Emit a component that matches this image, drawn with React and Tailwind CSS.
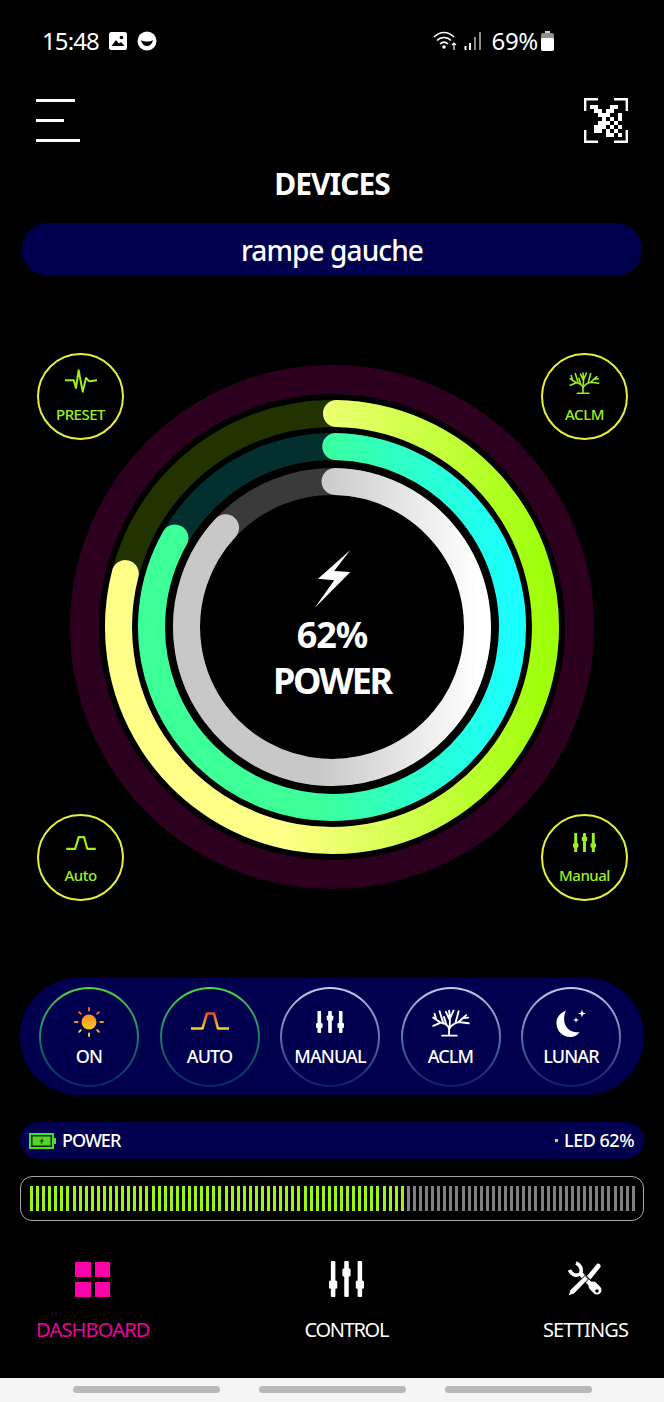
import React from "react";

const font = { fontFamily: '"Noto Sans", sans-serif' };

function arcPath(r, deg) {
  const cx = 332;
  const cy = 287;
  const start = (1.2 * Math.PI) / 180;
  const a = (deg * Math.PI) / 180;
  const sx = cx + r * Math.sin(start);
  const sy = cy - r * Math.cos(start);
  const x = cx + r * Math.sin(a);
  const y = cy - r * Math.cos(a);
  const large = deg > 180 ? 1 : 0;
  return `M ${sx.toFixed(2)} ${sy.toFixed(2)} A ${r} ${r} 0 ${large} 1 ${x.toFixed(2)} ${y.toFixed(2)}`;
}

function Sliders({ className }) {
  return (
    <svg viewBox="0 0 34 35" preserveAspectRatio="none" className={className} fill="currentColor">
      <rect x="1.8" y="0" width="4.4" height="35" rx="1" />
      <rect x="14.8" y="0" width="4.4" height="35" rx="1" />
      <rect x="27.8" y="0" width="4.4" height="35" rx="1" />
      <rect x="0" y="19" width="8" height="8" rx="1.5" />
      <rect x="13" y="7" width="8" height="8" rx="1.5" />
      <rect x="26" y="19" width="8" height="8" rx="1.5" />
    </svg>
  );
}

function Tree({ className }) {
  return (
    <svg viewBox="0 0 120 86" className={className} fill="none" stroke="currentColor" strokeWidth="6" strokeLinecap="round" strokeLinejoin="round">
      <path d="M32 83H78M54 83V58" />
      <path d="M54 60C50 48 40 44 28 42M28 42L4 52M28 42L4 26M14 33L8 14M36 45L24 6M46 50L38 24" />
      <path d="M55 60C57 45 58 30 54 4M56 34L44 8M56 30L68 4" />
      <path d="M55 60C60 50 70 44 84 40M84 40L116 44M84 40L108 18M96 28L114 26M74 44L84 6" />
    </svg>
  );
}

function Pulse({ className }) {
  return (
    <svg viewBox="0 0 96 72" className={className} fill="none" stroke="currentColor" strokeWidth="6" strokeLinejoin="round">
      <path d="M0 34H26L33 57L41 4L53 68L63 27L73 37L96 34" />
    </svg>
  );
}

function Trapeze({ className }) {
  return (
    <svg viewBox="0 0 38 18" className={className} fill="none" stroke="currentColor" strokeWidth="2.8" strokeLinejoin="round">
      <path d="M0 16.5H11.5L16 1.5H23L27 16.5H38" />
    </svg>
  );
}

function Sun() {
  const rays = [
    [0, "#f2753a"],
    [45, "#f2753a"],
    [90, "#f9a030"],
    [135, "#fbc02d"],
    [180, "#fdd835"],
    [225, "#fdd835"],
    [270, "#f9a030"],
    [315, "#f2753a"],
  ];
  return (
    <svg viewBox="0 0 30 30" className="w-[30px] h-[30px] mb-[2px]">
      <defs>
        <linearGradient id="sunDisc" x1="0" y1="0" x2="0" y2="1">
          <stop offset="0" stopColor="#fb8c2a" />
          <stop offset="1" stopColor="#ffc81f" />
        </linearGradient>
      </defs>
      <circle cx="15" cy="15" r="7.5" fill="url(#sunDisc)" />
      {rays.map(([deg, c]) => (
        <line key={deg} x1="15" y1="1" x2="15" y2="3.5" stroke={c} strokeWidth="1.8" strokeLinecap="round" transform={`rotate(${deg} 15 15)`} />
      ))}
    </svg>
  );
}

function Moon() {
  return (
    <svg viewBox="0 0 30 28" className="w-[30px] h-[28px] mb-[2px]" fill="white">
      <path d="M10 1.5C3.5 4 0 9 0.5 15C1 22.5 7 28 14 28C18.5 28 21.8 26 23.5 23C16.5 24.5 10 20 8.5 13.5C7.7 9.5 8.2 5 10 1.5Z" />
      <path d="M26 0.5L27 3.5L29.8 4.5L27 5.5L26 8.5L25 5.5L22.2 4.5L25 3.5Z" />
      <path d="M20 8L20.7 10.3L23 11L20.7 11.7L20 14L19.3 11.7L17 11L19.3 10.3Z" />
    </svg>
  );
}

function QrIcon() {
  const rows = [
    [0, 1, 5, 6],
    [1, 2, 4, 5],
    [2, 3, 4, 7],
    [3, 5, 7],
    [2, 3, 4, 6],
    [1, 2, 3, 5, 7],
    [1, 2, 4, 6],
    [4, 5, 7],
  ];
  return (
    <svg viewBox="0 0 44 45" className="w-[44px] h-[45px]" fill="none">
      <path d="M1.2 13V1.2H14M30 1.2H42.8V13M1.2 32V43.8H14M30 43.8H42.8V32" stroke="white" strokeWidth="2.4" />
      {rows.map((row, y) =>
        row.map((x) => (
          <rect key={`${x}-${y}`} x={6 + x * 4} y={7 + y * 4} width="4" height="4" fill="white" />
        ))
      )}
    </svg>
  );
}

function Tools() {
  return (
    <svg viewBox="0 0 36 36" className="w-[36px] h-[36px]" fill="none">
      <path d="M9 2C13 3.5 15.5 8 13.5 12.5C10 15.5 5 14.5 2.5 9" stroke="white" strokeWidth="3.6" />
      <path d="M13 12L27 27" stroke="white" strokeWidth="4.5" />
      <path d="M26 25L30 29" stroke="white" strokeWidth="9" strokeLinecap="round" />
      <circle cx="30" cy="30" r="1.8" fill="black" />
      <path d="M1 35L3 29L18 14.5L21.5 18L7 33Z" fill="white" stroke="black" strokeWidth="1" />
      <path d="M20 15L30 3C31.5 1.5 34.5 4 33.5 6L23.5 18.5Z" fill="white" />
    </svg>
  );
}

function CornerButton({ label, className, children }) {
  return (
    <div className={`absolute w-[87px] h-[87px] rounded-full border-2 border-[#e6f03c] flex flex-col items-center text-[#9cf01e] ${className}`}>
      <div className="h-[48px] w-full flex items-end justify-center">{children}</div>
      <span className="mt-[1px] text-[15px] leading-[20px] tracking-[-0.5px] font-medium">{label}</span>
    </div>
  );
}

function ModeButton({ label, active, children }) {
  return (
    <div className={`w-[100px] h-[100px] rounded-full p-[2px] bg-gradient-to-b ${active ? "from-[#4fd83c] to-[#0a2460]" : "from-[#c4cdea] to-[#0f1a68]"}`}>
      <div className="w-full h-full rounded-full bg-[#00004f] flex flex-col items-center text-white">
        <div className="h-[50px] w-full flex items-end justify-center">{children}</div>
        <span className="mt-[5px] text-[18px] leading-[24px] tracking-[-0.9px] font-medium">{label}</span>
      </div>
    </div>
  );
}

function NavItem({ label, color, tracking, children }) {
  return (
    <div className={`flex flex-col items-center ${color}`}>
      <div className="h-[36px] flex items-center">{children}</div>
      <span className={`mt-[20px] text-[20px] leading-[26px] ${tracking}`}>{label}</span>
    </div>
  );
}

export default function App() {
  const bars = Array.from({ length: 100 }, (_, i) => i);

  return (
    <div className="w-[664px] h-[1402px] bg-black flex flex-col text-white overflow-hidden" style={font}>
      {/* Status bar */}
      <div className="h-[84px] pl-[42px] pr-[110px] pt-[25px] flex justify-between items-start">
        <div className="flex items-center h-[32px]">
          <span className="text-[24px] leading-[32px] tracking-[-0.9px]">15:48</span>
          <svg viewBox="0 0 18 18" className="w-[18px] h-[18px] ml-[10px]">
            <rect width="18" height="18" rx="2.5" fill="white" />
            <circle cx="12.5" cy="5.5" r="1.8" fill="black" />
            <path d="M2.5 14L7 8L10 11.5L12 10L15.5 14Z" fill="black" />
          </svg>
          <svg viewBox="0 0 20 20" className="w-[20px] h-[20px] ml-[10px]">
            <circle cx="10" cy="10" r="9.5" fill="white" />
            <path d="M4 9C5 13 7 15 10 15C13 15 15 13 16 9C13 11 7 11 4 9Z" fill="black" />
          </svg>
        </div>
        <div className="flex items-center h-[32px]">
          <svg viewBox="0 0 26 22" className="w-[26px] h-[22px]" fill="none" stroke="white" strokeWidth="1.5">
            <path d="M1 7C7 1 15 1 21 7M4 10.5C8 6.5 14 6.5 18 10.5M7 14C9.5 11.5 12.5 11.5 15 14" />
            <circle cx="11" cy="17" r="1" fill="white" />
            <path d="M21 20V13M19 15L21 13L23 15" strokeWidth="1.2" />
          </svg>
          <svg viewBox="0 0 18 20" className="w-[18px] h-[20px] ml-[5px]" fill="#8a8a8a">
            <rect x="0.5" y="15" width="2" height="4" fill="white" />
            <rect x="5" y="12" width="2" height="7" fill="white" />
            <rect x="10" y="6" width="2" height="13" />
            <rect x="15" y="1" width="2" height="18" />
          </svg>
          <span className="ml-[10px] text-[24px] leading-[32px] tracking-[-0.3px]">69%</span>
          <svg viewBox="0 0 13 20" className="w-[13px] h-[20px] ml-[3px]">
            <rect x="4" y="0" width="5" height="3" fill="#cfcfcf" />
            <rect x="0" y="2" width="13" height="18" rx="2" fill="#8f8f8f" />
            <rect x="0" y="7" width="13" height="13" rx="2" fill="white" />
          </svg>
        </div>
      </div>

      {/* Top bar */}
      <div className="h-[60px] mt-[14px] px-[36px] flex justify-between items-start">
        <div className="flex flex-col gap-[17px] pt-[1px]">
          <div className="w-[39px] h-[3px] bg-white" />
          <div className="w-[28px] h-[3px] bg-white" />
          <div className="w-[44px] h-[3px] bg-white" />
        </div>
        <QrIcon />
      </div>

      <div className="h-[40px] mt-[6px] text-center text-[30px] leading-[40px] font-bold tracking-[-1px]">DEVICES</div>

      <div className="mx-[22px] mt-[19px] h-[53px] rounded-full bg-[#00004f] flex items-center justify-center text-[28px] font-medium tracking-[-0.9px]">
        rampe gauche
      </div>

      {/* Gauge */}
      <div className="relative mt-[64px] h-[574px]">
        <svg viewBox="0 0 664 574" className="w-[664px] h-[574px] block" fill="none">
          <defs>
            <linearGradient id="ringYellow" gradientUnits="userSpaceOnUse" x1="118" y1="0" x2="546" y2="0">
              <stop offset="0.38" stopColor="#ffff88" />
              <stop offset="1" stopColor="#9eff0a" />
            </linearGradient>
            <linearGradient id="ringGreen" gradientUnits="userSpaceOnUse" x1="151" y1="0" x2="513" y2="0">
              <stop offset="0.45" stopColor="#3dff98" />
              <stop offset="1" stopColor="#1affff" />
            </linearGradient>
            <linearGradient id="ringWhite" gradientUnits="userSpaceOnUse" x1="186" y1="0" x2="478" y2="0">
              <stop offset="0.45" stopColor="#c8c8c8" />
              <stop offset="1" stopColor="#ffffff" />
            </linearGradient>
          </defs>
          <circle cx="332" cy="287" r="247.5" stroke="#2e001f" strokeWidth="29" />
          <circle cx="332" cy="287" r="213.5" stroke="#233300" strokeWidth="27" />
          <circle cx="332" cy="287" r="180.5" stroke="#03302f" strokeWidth="27" />
          <circle cx="332" cy="287" r="145.5" stroke="#3a3a3a" strokeWidth="27" />
          <path d={arcPath(213.5, 284.5)} stroke="url(#ringYellow)" strokeWidth="27" strokeLinecap="round" />
          <path d={arcPath(180.5, 299.5)} stroke="url(#ringGreen)" strokeWidth="27" strokeLinecap="round" />
          <path d={arcPath(145.5, 313)} stroke="url(#ringWhite)" strokeWidth="27" strokeLinecap="round" />
        </svg>

        <div className="absolute left-0 right-0 top-[210px] flex flex-col items-center">
          <svg viewBox="0 0 106 172" className="w-[37px] h-[58px]" fill="white">
            <path d="M106 0L10 85L58 90L0 172L106 65L58 62Z" />
          </svg>
          <span className="mt-[4px] text-[36px] leading-[46px] font-bold tracking-[-1px]">62%</span>
          <span className="text-[36px] leading-[46px] font-bold tracking-[-2.2px]">POWER</span>
        </div>

        <CornerButton label="PRESET" className="left-[37px] top-[13px]">
          <Pulse className="w-[32px] h-[24px] mb-[10px]" />
        </CornerButton>
        <CornerButton label="ACLM" className="left-[541px] top-[13px]">
          <Tree className="w-[31px] h-[22px] mb-[9px]" />
        </CornerButton>
        <CornerButton label="Auto" className="left-[37px] top-[474px]">
          <Trapeze className="w-[30px] h-[14px] mb-[14px]" />
        </CornerButton>
        <CornerButton label="Manual" className="left-[541px] top-[474px]">
          <Sliders className="w-[23px] h-[19px] mb-[12px]" />
        </CornerButton>
      </div>

      {/* Mode selector */}
      <div className="mx-[20px] mt-[64px] h-[117px] rounded-[58px] bg-[#00004f] pl-[19px] pr-[23px] flex items-center justify-between">
        <ModeButton label="ON" active>
          <Sun />
        </ModeButton>
        <ModeButton label="AUTO" active>
          <svg viewBox="0 0 38 18" className="w-[38px] h-[18px] mb-[9px]" fill="none" strokeWidth="2.6" strokeLinejoin="round">
            <defs>
              <linearGradient id="autoStroke" gradientUnits="userSpaceOnUse" x1="0" y1="0" x2="0" y2="18">
                <stop offset="0" stopColor="#e0452e" />
                <stop offset="1" stopColor="#ffd52a" />
              </linearGradient>
            </defs>
            <path d="M0 16.5H11.5L16 1.5H23L27 16.5H38" stroke="url(#autoStroke)" />
          </svg>
        </ModeButton>
        <ModeButton label="MANUAL">
          <Sliders className="w-[28px] h-[22px] mb-[6px]" />
        </ModeButton>
        <ModeButton label="ACLM">
          <Tree className="w-[38px] h-[28px] mb-[2px]" />
        </ModeButton>
        <ModeButton label="LUNAR">
          <Moon />
        </ModeButton>
      </div>

      {/* Power strip */}
      <div className="mx-[20px] mt-[27px] h-[37px] rounded-full bg-[#00004f] pl-[9px] pr-[10px] flex items-center justify-between text-[18px] font-medium">
        <div className="flex items-center">
          <svg viewBox="0 0 27 16" className="w-[27px] h-[16px]">
            <rect x="1" y="1" width="23" height="14" fill="#0c2a10" stroke="#3fe030" strokeWidth="2" />
            <rect x="25" y="5" width="2" height="6" fill="#3fe030" />
            <rect x="3.5" y="3.5" width="18" height="9" fill="#56d426" />
            <path d="M14 4.5L10.5 8.5H12.5L11.5 11.5L15 7.5H13Z" fill="#0c3a08" />
          </svg>
          <span className="ml-[6px] tracking-[-1px]">POWER</span>
        </div>
        <div className="flex items-center">
          <div className="w-[3px] h-[3px] bg-[#9eff0a]" />
          <span className="ml-[6px] tracking-[-0.5px]">LED 62%</span>
        </div>
      </div>

      <div className="mx-[20px] mt-[17px] h-[45px] rounded-[12px] border border-[#a8a8a8] pl-[9px] pr-[8px] py-[9px] flex justify-between">
        {bars.map((i) => (
          <div key={i} className={`w-[3px] h-full ${i < 62 ? "bg-[#9ef50f]" : "bg-[#808080]"}`} />
        ))}
      </div>

      {/* Bottom nav */}
      <div className="h-[157px] px-[36px] pt-[40px] flex justify-between items-start">
        <NavItem label="DASHBOARD" color="text-[#f000a0]" tracking="tracking-[-0.8px]">
          <div className="grid grid-cols-2 gap-x-[4px] gap-y-[5px] w-[35px]">
            <div className="h-[15px] bg-[#ff00aa]" />
            <div className="h-[15px] bg-[#ff00aa]" />
            <div className="h-[15px] bg-[#ff00aa]" />
            <div className="h-[15px] bg-[#ff00aa]" />
          </div>
        </NavItem>
        <NavItem label="CONTROL" color="text-white" tracking="tracking-[-1.3px]">
          <Sliders className="w-[35px] h-[36px]" />
        </NavItem>
        <NavItem label="SETTINGS" color="text-white" tracking="tracking-[-0.9px]">
          <Tools />
        </NavItem>
      </div>

      {/* System nav */}
      <div className="flex-1 bg-[#f5f5f5] pt-[8px] flex justify-center gap-[39px]">
        <div className="w-[147px] h-[7px] rounded-full bg-[#b8b8b8]" />
        <div className="w-[147px] h-[7px] rounded-full bg-[#b8b8b8]" />
        <div className="w-[147px] h-[7px] rounded-full bg-[#b8b8b8]" />
      </div>
    </div>
  );
}
